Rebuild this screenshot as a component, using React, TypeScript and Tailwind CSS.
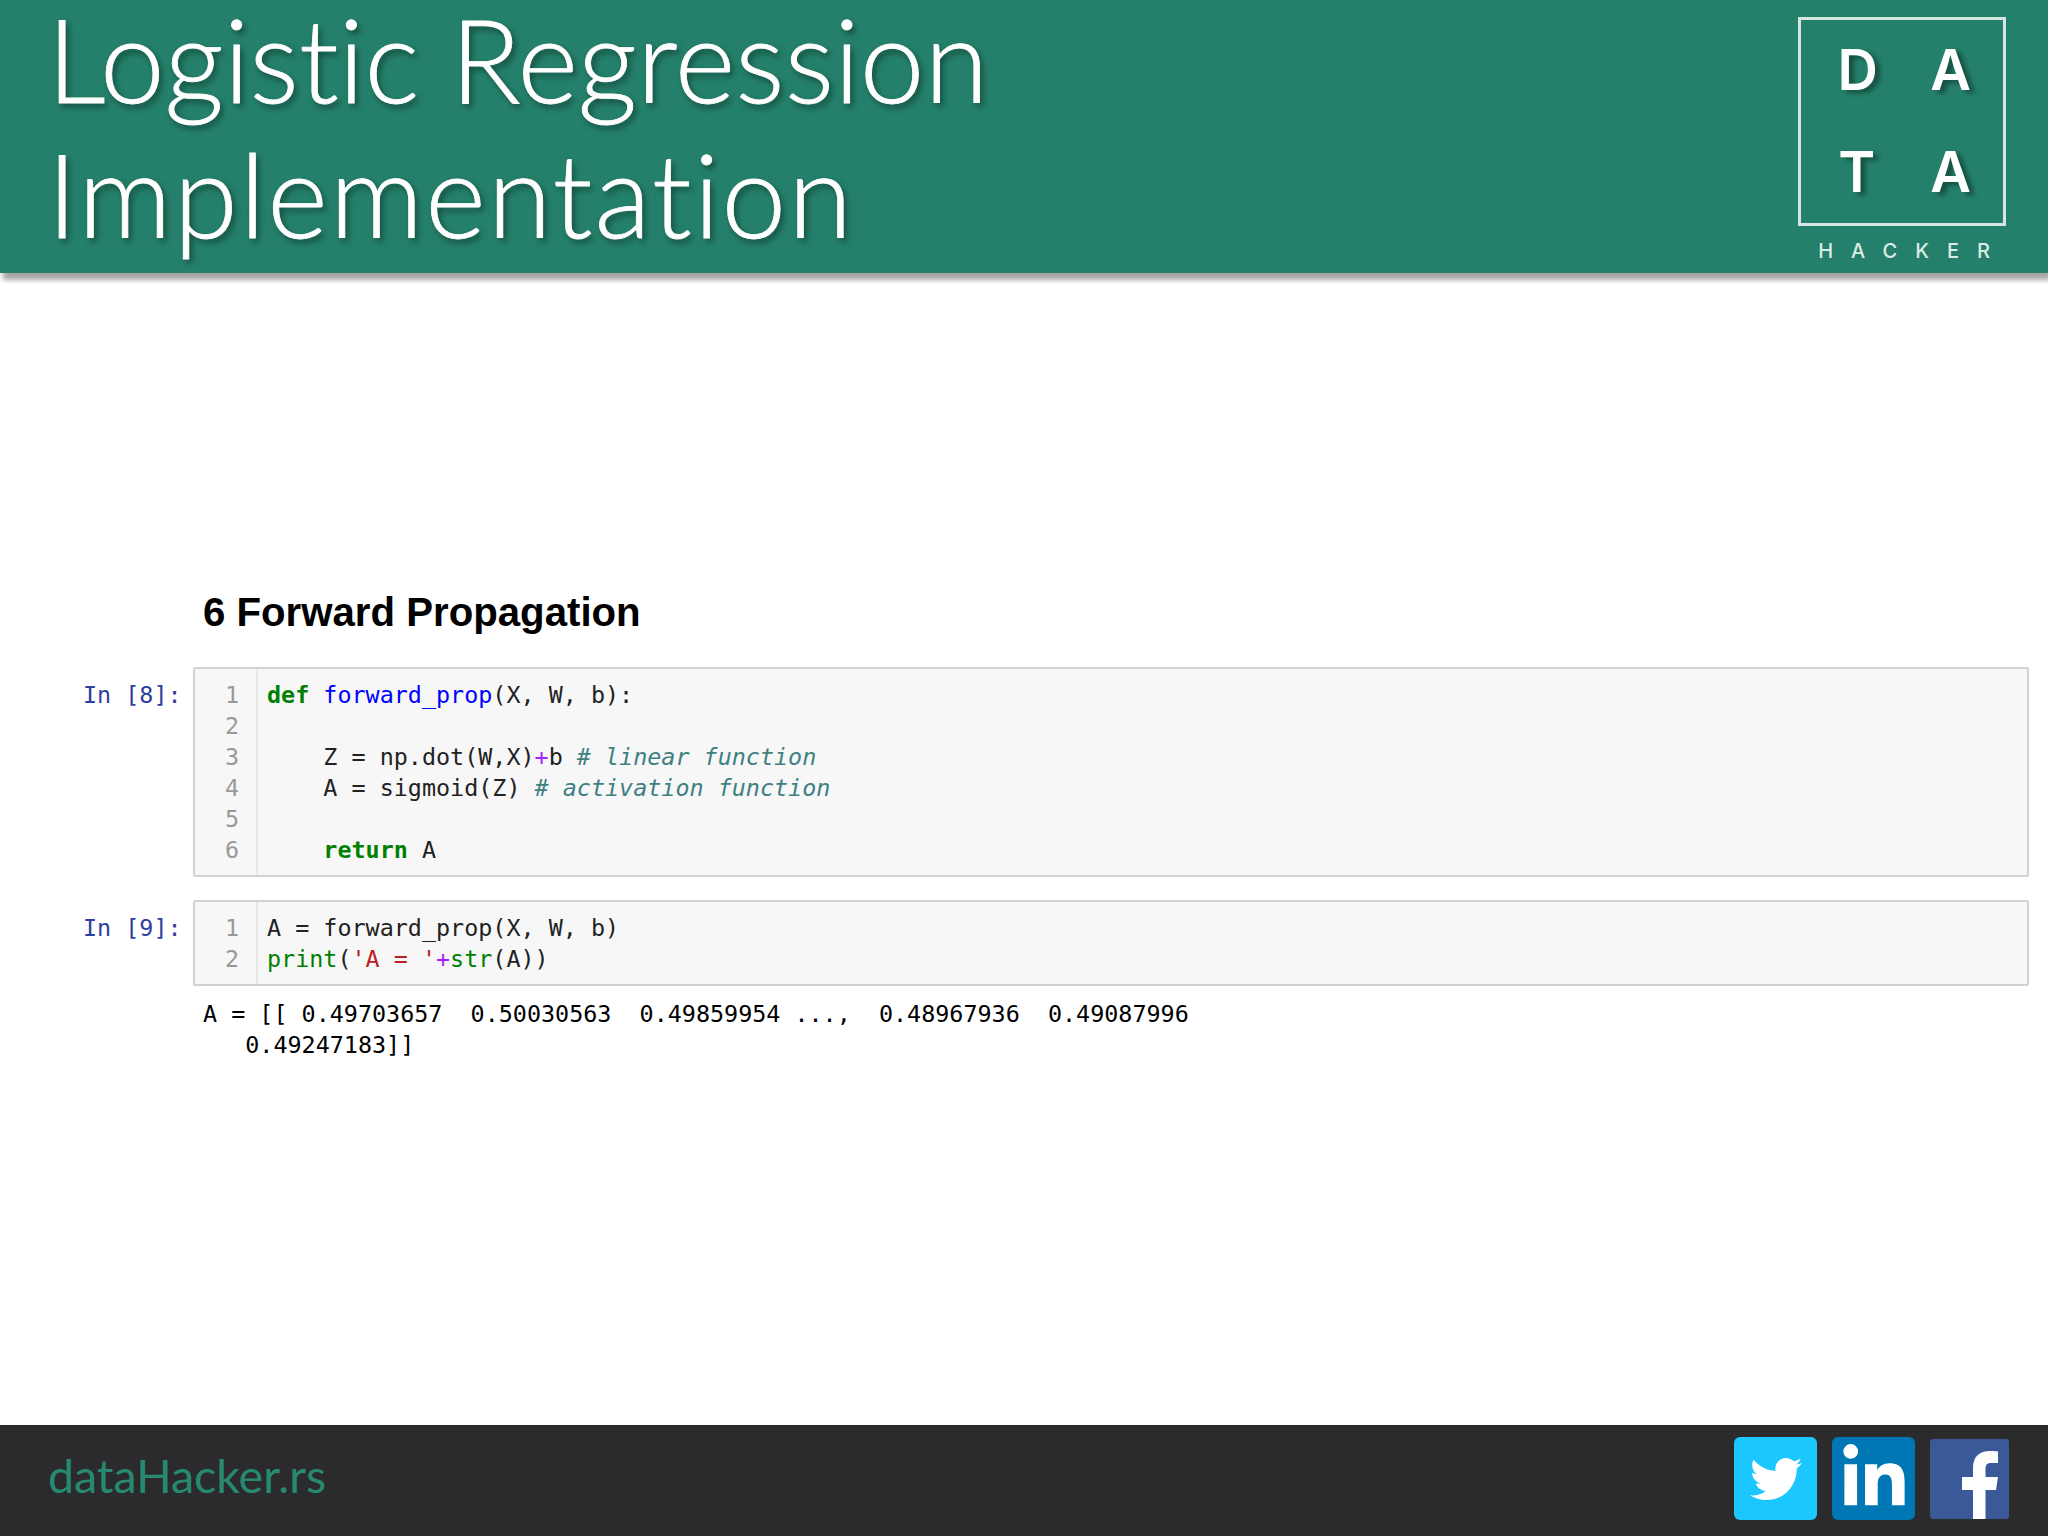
import { FaTwitter, FaLinkedinIn } from 'react-icons/fa';
import type { ReactNode } from 'react';

const MONO = "font-['DejaVu_Sans_Mono','Liberation_Mono',monospace] text-[23.4px] leading-[31px]";

const Kw = ({ children }: { children: ReactNode }) => <span className="font-bold text-[#008000]">{children}</span>;
const Fn = ({ children }: { children: ReactNode }) => <span className="text-[#0000ff]">{children}</span>;
const Op = ({ children }: { children: ReactNode }) => <span className="text-[#aa22ff]">{children}</span>;
const Cm = ({ children }: { children: ReactNode }) => <span className="italic text-[#408080]">{children}</span>;

function Cell({ prompt, lines }: { prompt: string; lines: ReactNode[] }) {
  return (
    <div className="flex items-start">
      <div className={`w-[110px] pt-[13px] pr-[12px] text-right whitespace-pre text-[#303f9f] ${MONO}`}>{prompt}</div>
      <div className="flex flex-1 rounded-[2px] border-2 border-[#d2d2d2] bg-[#f7f7f8]">
        <div className={`w-[63px] border-r-2 border-[#e7e7e7] pt-[11px] pb-[9px] pr-[17px] text-right text-[#999] ${MONO}`}>
          {lines.map((_, i) => (
            <div key={i}>{i + 1}</div>
          ))}
        </div>
        <div className={`flex-1 pt-[11px] pb-[9px] pl-[9px] whitespace-pre text-[#222] ${MONO}`}>
          {lines.map((l, i) => (
            <div key={i} className="h-[31px]">{l}</div>
          ))}
        </div>
      </div>
    </div>
  );
}

export default function App() {
  return (
    <div className="flex h-[1536px] w-[2048px] flex-col overflow-hidden bg-white">
      <header className="relative z-10 flex h-[273px] items-start justify-between bg-[#24806a] pl-[47px] pr-[40px] shadow-[3px_7px_5px_rgba(0,0,0,0.35)]">
        <h1 className="font-['Lato',sans-serif] text-[116px] font-light text-white [-webkit-text-stroke:0.8px_white] [font-variant-ligatures:none] [text-shadow:3px_4px_6px_rgba(0,0,0,0.45)]">
          <span className="block leading-[118px]">Logistic Regression</span>
          <span className="mt-[8px] block leading-[135px] tracking-[2px]">Implementation</span>
        </h1>
        <div className="flex flex-col items-center pt-[17px] font-['Inter',sans-serif] text-white">
          <div className="grid h-[209px] w-[208px] grid-cols-2 border-[3px] border-[#d5e6e0] text-center text-[56px] leading-[101px] font-semibold [text-shadow:5px_3px_5px_rgba(0,0,0,0.4)]">
            <span className="pl-[12px]">D</span>
            <span className="pr-[16px] pl-[12px]">A</span>
            <span className="pl-[10px]">T</span>
            <span className="pr-[16px] pl-[12px]">A</span>
          </div>
          <div className="pt-[12px] pl-[22px] text-[20px] leading-[27px] font-medium tracking-[18px] text-[#dcebe6]">HACKER</div>
        </div>
      </header>

      <main className="flex-1 pt-[317px] pr-[19px] pl-[83px]">
        <h2 className="pl-[120px] font-['Liberation_Sans',Arial,sans-serif] text-[40.200px] leading-[45px] font-bold text-[#000]">
          6 Forward Propagation
        </h2>
        <div className="mt-[32px] flex flex-col gap-[23px]">
          <Cell
            prompt="In [8]:"
            lines={[
              <><Kw>def</Kw> <Fn>forward_prop</Fn>(X, W, b):</>,
              '',
              <>    Z = np.dot(W,X)<Op>+</Op>b <Cm># linear function</Cm></>,
              <>    A = sigmoid(Z) <Cm># activation function</Cm></>,
              '',
              <>    <Kw>return</Kw> A</>,
            ]}
          />
          <Cell
            prompt="In [9]:"
            lines={[
              <>A = forward_prop(X, W, b)</>,
              <><span className="text-[#008000]">print</span>(<span className="text-[#ba2121]">'A = '</span><Op>+</Op><span className="text-[#008000]">str</span>(A))</>,
            ]}
          />
        </div>
        <div className={`mt-[13px] pl-[120px] whitespace-pre text-black ${MONO}`}>
          {'A = [[ 0.49703657  0.50030563  0.49859954 ...,  0.48967936  0.49087996\n   0.49247183]]'}
        </div>
      </main>

      <footer className="flex h-[111px] items-center justify-between bg-[#2b2a2d] pr-[39px] pl-[48px]">
        <span className="-mt-[10px] font-['Lato',sans-serif] text-[46.5px] leading-none text-[#278a70] [font-variant-ligatures:none]">dataHacker.rs</span>
        <div className="-mt-[4px] flex items-center gap-[15px]">
          <div className="flex h-[83px] w-[83px] items-center justify-center rounded-[6px] bg-[#1cc6ff] text-white">
            <FaTwitter size={52} />
          </div>
          <div className="flex h-[83px] w-[83px] items-center justify-center rounded-[6px] bg-[#0077b5] text-white">
            <FaLinkedinIn size={70} />
          </div>
          <div className="h-[80px] w-[79px] overflow-hidden rounded-[3px] bg-[#3b5998]">
            <svg viewBox="0 0 79 80" className="h-full w-full" fill="#fff">
              <path d="M43 80V51H32V38H43V29C43 17 50 12 60 12C64 12 67 12.3 68 12.5V24H61C57 24 55.500 26 55.500 30V38H68L66 51H55.500V80Z" />
            </svg>
          </div>
        </div>
      </footer>
    </div>
  );
}
